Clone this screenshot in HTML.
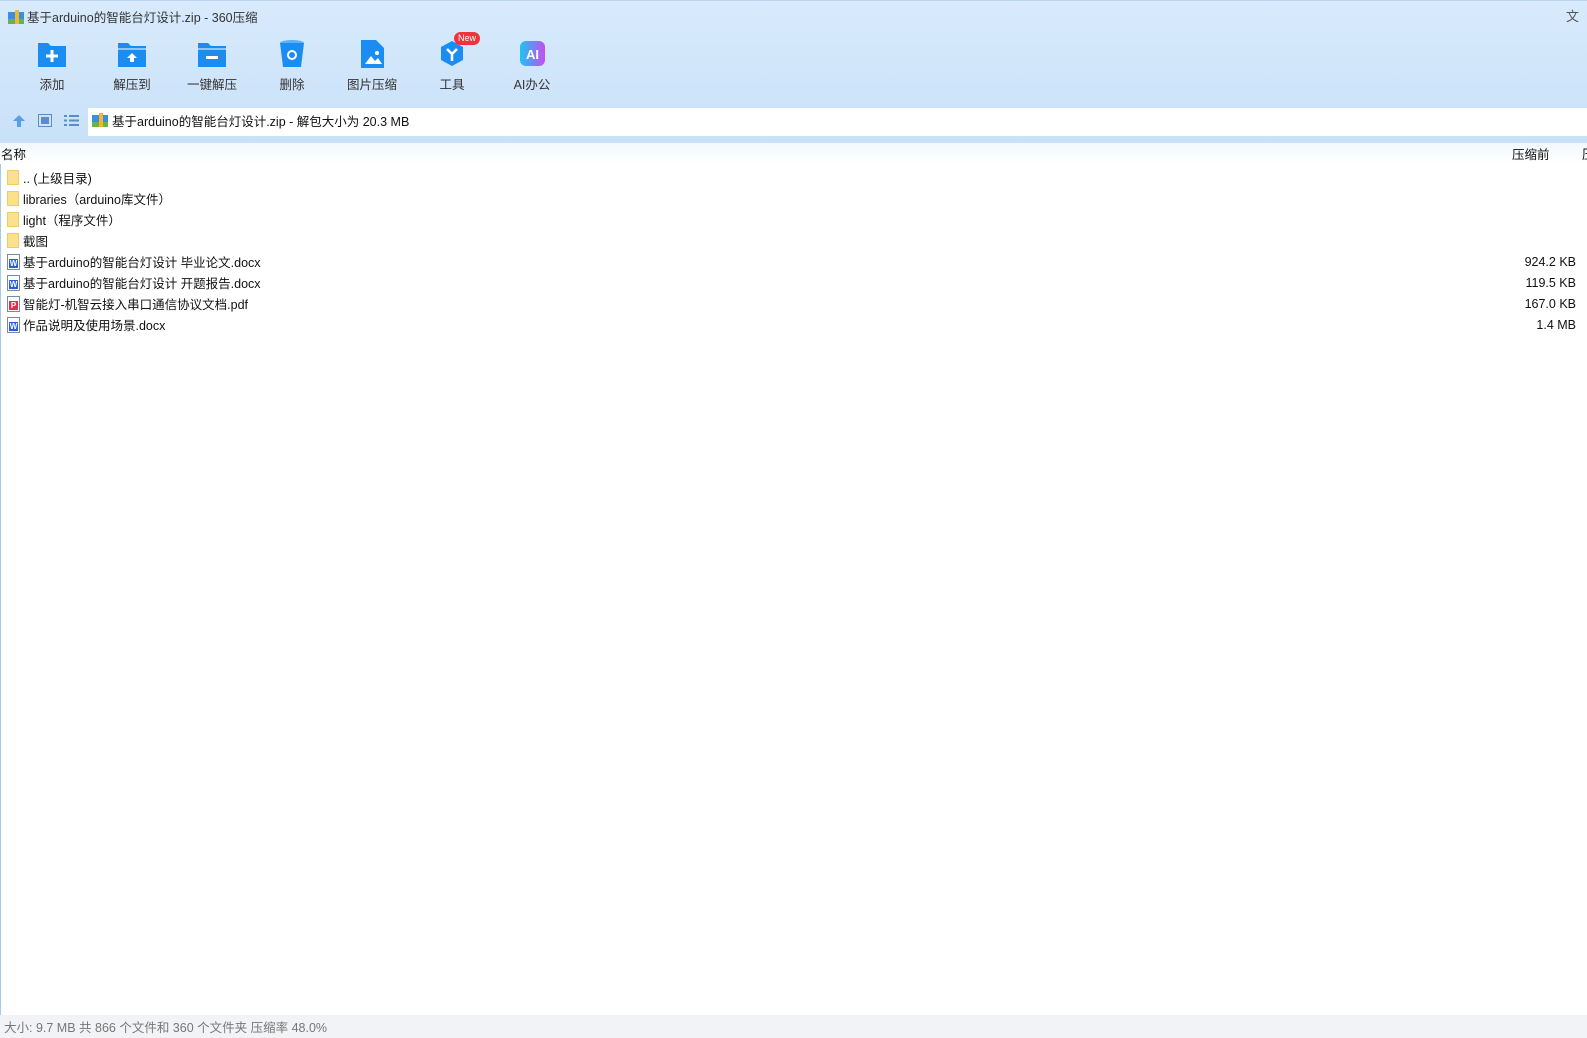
<!DOCTYPE html>
<html><head><meta charset="utf-8"><style>
*{margin:0;padding:0;box-sizing:border-box}
body{width:1587px;height:1038px;overflow:hidden;background:#fff;font-family:"Liberation Sans","Noto Sans CJK SC",sans-serif;font-size:13px;color:#222;position:relative}
.top{position:absolute;left:0;top:0;width:1587px;height:143px;background:linear-gradient(#d8eafc,#c9e1f8);border-top:1px solid #b9d4ef}
.title{position:absolute;left:27px;top:6px;font-size:12.5px;color:#333}
.tb{position:absolute;top:38px;width:80px;text-align:center;font-size:12.5px;color:#333}
.tb svg{display:block;margin:0 auto 5px}
.addr{position:absolute;left:88px;top:107px;width:1499px;height:28px;background:#fff}
.addr span{position:absolute;left:24px;top:3px;font-size:12.5px;color:#111}
.colh{position:absolute;left:0;top:143px;width:1587px;height:21px;background:linear-gradient(#f2f8fe,#fff)}
.row{position:absolute;left:6px;height:21px;font-size:12.5px;color:#111;width:1560px}
.row .n{position:absolute;left:17px;top:0px}
.row .s{position:absolute;right:-10px;top:3px}
.fold{position:absolute;left:1px;top:2px;width:12px;height:15px;background:#fbe08e;border:1px solid #f0cc68}
.doc{position:absolute;left:1px;top:2px;width:13px;height:16px;border:1px solid #7a8aa0;background:#fff}
.doc i{position:absolute;left:1px;bottom:1px;width:9px;height:9px;color:#fff;font-style:normal;font-size:8px;line-height:9px;text-align:center;font-weight:bold}
.status{position:absolute;left:0;top:1015px;width:1587px;height:23px;background:#f1f3f6;color:#777;font-size:12.5px;padding:2px 0 0 4px}
</style></head><body>
<div class="top">
<svg style="position:absolute;left:8px;top:9px" width="16" height="14"><rect x="0" y="2" width="16" height="12" fill="#3a8ee0"/><rect x="0" y="9" width="16" height="5" fill="#6bb24a"/><rect x="7" y="0" width="4" height="14" fill="#f2b631"/></svg>
<div class="title">基于arduino的智能台灯设计.zip - 360压缩</div>
<div style="position:absolute;left:1566px;top:5px;font-size:13px;color:#555">文</div>
<div class="tb" style="left:12px"><svg width="32" height="30"><path d="M2 4h10l3 3h15v21H2z" fill="#1b8df2"/><path d="M16 11v12M10 17h12" stroke="#fff" stroke-width="3"/></svg>添加</div>
<div class="tb" style="left:92px"><svg width="32" height="30"><path d="M2 4h10l3 3h15v21H2z" fill="#1b8df2"/><rect x="2" y="9" width="28" height="2" fill="#8cc6fb"/><path d="M16 14l-5 5h3v4h4v-4h3z" fill="#fff"/></svg>解压到</div>
<div class="tb" style="left:172px"><svg width="32" height="30"><path d="M2 4h10l3 3h15v21H2z" fill="#1b8df2"/><rect x="2" y="9" width="28" height="2" fill="#8cc6fb"/><rect x="10" y="17" width="12" height="3" fill="#fff"/></svg>一键解压</div>
<div class="tb" style="left:252px"><svg width="32" height="30"><ellipse cx="16" cy="4" rx="12" ry="3" fill="#5ab0fa"/><path d="M4 4l3 24h18l3-24z" fill="#1b8df2"/><circle cx="16" cy="16" r="4" fill="none" stroke="#fff" stroke-width="2"/></svg>删除</div>
<div class="tb" style="left:332px"><svg width="32" height="30"><path d="M5 1h15l8 8v20H5z" fill="#1b8df2"/><path d="M9 25l6-8 4 5 3-3 4 6z" fill="#fff"/><circle cx="21" cy="14" r="2" fill="#fff"/></svg>图片压缩</div>
<div class="tb" style="left:412px"><svg width="32" height="30"><path d="M16 2l11 6v13l-11 6-11-6V8z" fill="#1b8df2"/><path d="M11 10l5 5 5-5M16 15v7" stroke="#fff" stroke-width="2.5" fill="none"/></svg>工具</div>
<div style="position:absolute;left:454px;top:31px;width:26px;height:13px;background:#f0323c;border-radius:7px;color:#fff;font-size:9px;line-height:13px;text-align:center">New</div>
<div class="tb" style="left:492px"><svg width="32" height="30"><defs><linearGradient id="g" x1="0" x2="1"><stop offset="0" stop-color="#19c5f2"/><stop offset="1" stop-color="#c64df0"/></linearGradient></defs><rect x="4" y="2" width="25" height="25" rx="6" fill="url(#g)"/><text x="16.5" y="20" font-size="13" font-weight="bold" fill="#fff" text-anchor="middle" font-family="Liberation Sans">AI</text></svg>AI办公</div>
<svg style="position:absolute;left:12px;top:113px" width="14" height="14"><path d="M7 1L1 7h4v6h4V7h4z" fill="#5a9ee8"/></svg>
<svg style="position:absolute;left:38px;top:113px" width="14" height="13"><rect x="0.5" y="0.5" width="13" height="12" fill="#cfe2f7" stroke="#5a8ccc"/><rect x="3" y="3" width="8" height="7" fill="#5a8ccc"/></svg>
<svg style="position:absolute;left:64px;top:113px" width="15" height="13"><g fill="#5a8ccc"><rect x="0" y="1" width="3" height="2"/><rect x="5" y="1" width="10" height="2"/><rect x="0" y="5.5" width="3" height="2"/><rect x="5" y="5.5" width="10" height="2"/><rect x="0" y="10" width="3" height="2"/><rect x="5" y="10" width="10" height="2"/></g></svg>
<div class="addr"><svg style="position:absolute;left:4px;top:5px" width="16" height="14"><rect x="0" y="2" width="16" height="12" fill="#3a8ee0"/><rect x="0" y="9" width="16" height="5" fill="#6bb24a"/><rect x="7" y="0" width="4" height="14" fill="#f2b631"/></svg><span>基于arduino的智能台灯设计.zip - 解包大小为 20.3 MB</span></div>
</div>
<div class="colh"><span style="position:absolute;left:1px;top:1px;color:#111;font-size:12.5px">名称</span><span style="position:absolute;left:1512px;top:1px;color:#111;font-size:12.5px">压缩前</span><span style="position:absolute;left:1582px;top:1px;color:#111">压</span></div>
<div style="position:absolute;left:0;top:164px;width:1px;height:851px;background:#a8c8ec"></div>
<div class="row" style="top:168px"><div class="fold"></div><span class="n">.. (上级目录)</span></div>
<div class="row" style="top:189px"><div class="fold"></div><span class="n">libraries（arduino库文件）</span></div>
<div class="row" style="top:210px"><div class="fold"></div><span class="n">light（程序文件）</span></div>
<div class="row" style="top:231px"><div class="fold"></div><span class="n">截图</span></div>
<div class="row" style="top:252px"><div class="doc"><i style="background:#2b5fd9">W</i></div><span class="n">基于arduino的智能台灯设计 毕业论文.docx</span><span class="s">924.2 KB</span></div>
<div class="row" style="top:273px"><div class="doc"><i style="background:#2b5fd9">W</i></div><span class="n">基于arduino的智能台灯设计 开题报告.docx</span><span class="s">119.5 KB</span></div>
<div class="row" style="top:294px"><div class="doc"><i style="background:#e0304a">P</i></div><span class="n">智能灯-机智云接入串口通信协议文档.pdf</span><span class="s">167.0 KB</span></div>
<div class="row" style="top:315px"><div class="doc"><i style="background:#2b5fd9">W</i></div><span class="n">作品说明及使用场景.docx</span><span class="s">1.4 MB</span></div>
<div class="status">大小: 9.7 MB 共 866 个文件和 360 个文件夹 压缩率 48.0%</div>
</body></html>
